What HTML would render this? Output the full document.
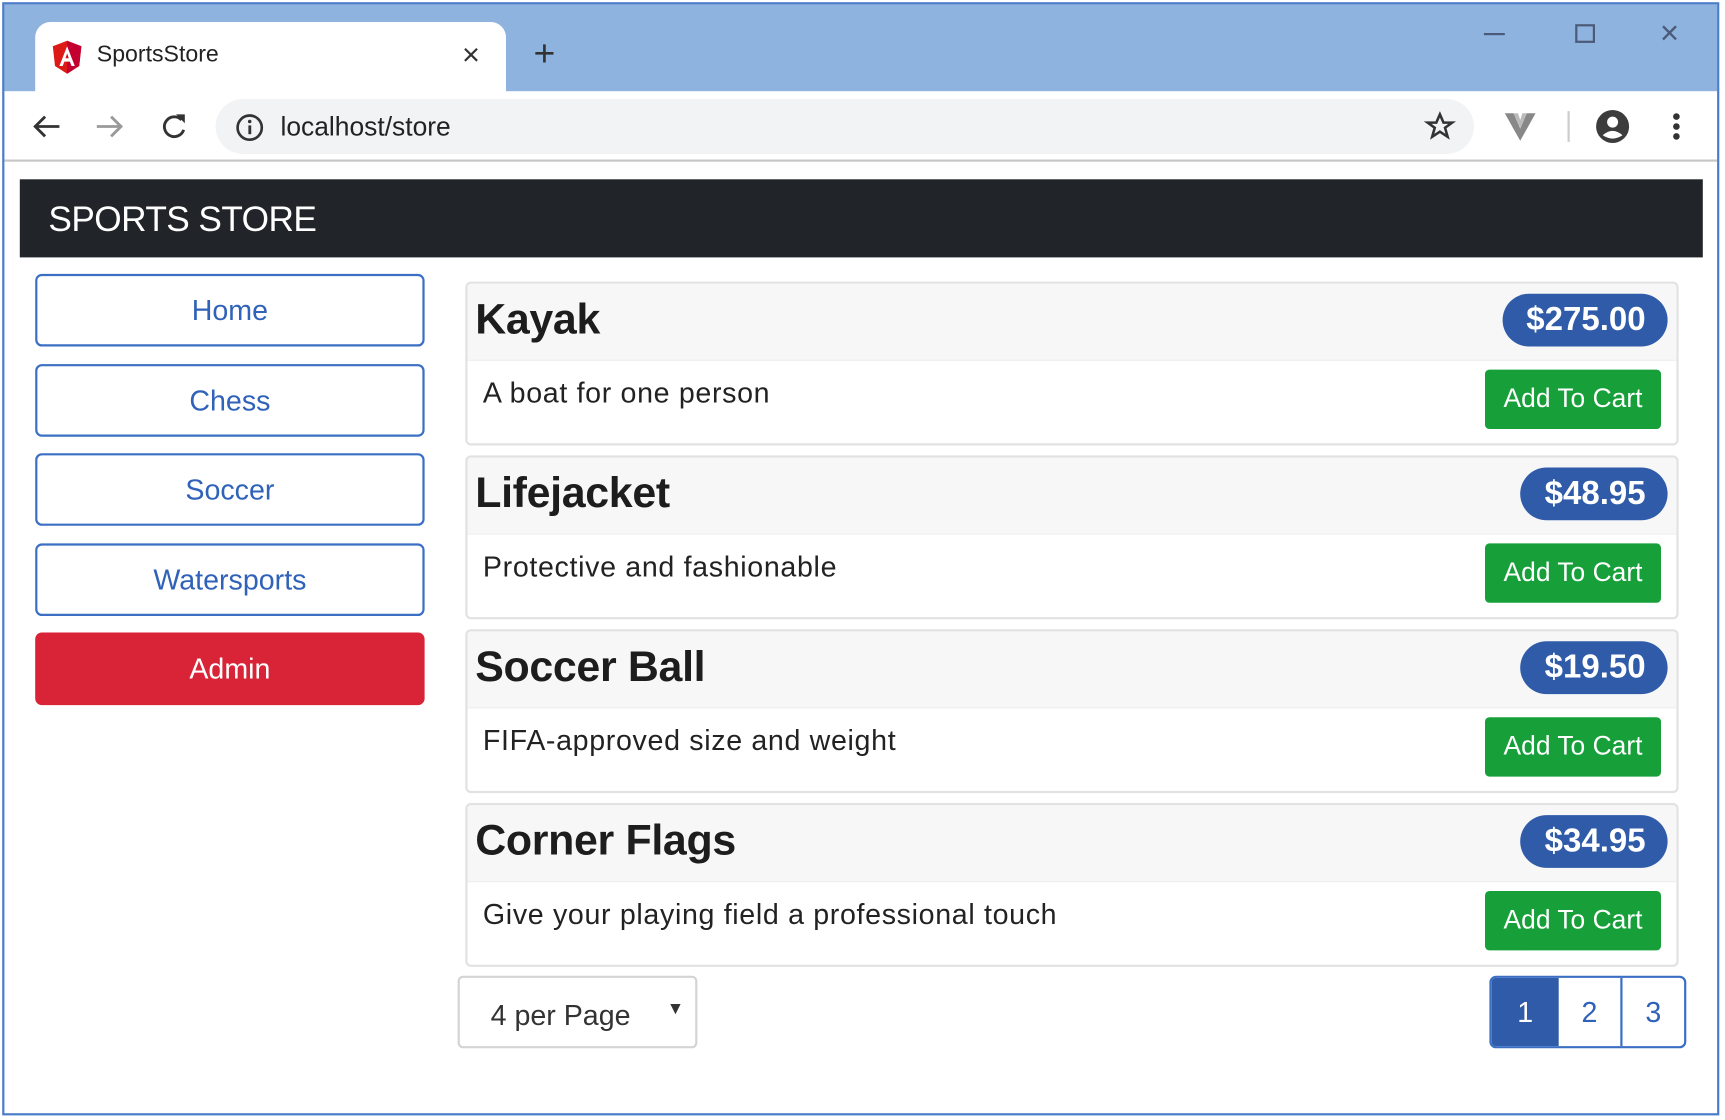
<!DOCTYPE html>
<html><head><meta charset="utf-8"><style>
*{box-sizing:border-box;margin:0;padding:0}
html,body{width:1725px;height:1120px;overflow:hidden;background:#fff;font-family:"Liberation Sans",sans-serif}
#w{position:absolute;left:0;top:0;width:1568px;height:1018px;transform:scale(1.1);transform-origin:0 0}
.a{position:absolute}
.frame{left:2px;top:2px;width:1561px;height:1012px;border:2px solid #4a7cc9}
.tabbar{left:4px;top:4px;width:1557px;height:79px;background:#8fb3df}
.tab{left:32px;top:20px;width:428px;height:64px;background:#fff;border-radius:14px 14px 0 0}
.tb{left:4px;top:83px;width:1557px;height:64px;background:#fff;border-bottom:2px solid #c8c8c8}
.addr{left:196px;top:90px;width:1144px;height:50px;background:#f1f3f4;border-radius:25px}
.hdr{left:18px;top:163px;width:1530px;height:71px;background:#212529;color:#fff;font-size:32px;padding:18px 0 0 26px;letter-spacing:-0.5px}
.nb{left:32px;width:354px;height:66px;border:2px solid #3a6fc4;border-radius:6px;color:#2f62b8;font-size:26px;text-align:center;line-height:62px}
.card{left:423px;width:1103px;height:149px;border:2px solid #e2e2e2;border-radius:5px;overflow:hidden}
.ch{position:absolute;left:0;top:0;width:100%;height:70px;background:#f7f7f7;border-bottom:1px solid #eee}
.ct{position:absolute;left:7px;top:11px;font-size:39px;font-weight:bold;color:#1d1d1d;letter-spacing:-0.3px}
.bd{position:absolute;right:8px;top:9px;height:48px;border-radius:24px;background:#2f5ba8;color:#fff;font-weight:bold;font-size:30px;line-height:48px;padding:0 20px 0 22px}
.ds{position:absolute;left:14px;top:84px;font-size:26px;color:#222;letter-spacing:0.6px}
.bt{position:absolute;right:14px;top:78px;width:160px;height:54px;background:#17a03a;border-radius:4px;color:#fff;font-size:24px;text-align:center;line-height:54px}
</style></head><body><div id="w">
<div class="a tabbar"></div>
<div class="a tab"></div>
<svg class="a" style="left:46px;top:36px" width="30" height="32" viewBox="0 0 30 32"><path d="M15 1 L28 6 L26 24 L15 31 L4 24 L2 6Z" fill="#dd1b16"/><path d="M15 1 L28 6 L26 24 L15 31Z" fill="#c3002f"/><path d="M15 6 L8 24 H11 L12.5 20 H17.5 L19 24 H22Z M13.5 17 L15 12.5 L16.5 17Z" fill="#fff"/></svg>
<div class="a" style="left:88px;top:38px;font-size:21px;color:#222">SportsStore</div>
<div class="a" style="left:420px;top:34px;font-size:28px;color:#333">×</div>
<div class="a" style="left:485px;top:30px;font-size:34px;color:#333">+</div>
<div class="a" style="left:1349px;top:30px;width:19px;height:2px;background:#4a5a78"></div>
<div class="a" style="left:1432px;top:22px;width:18px;height:17px;border:2px solid #4a5a78"></div>
<div class="a" style="left:1509px;top:14px;font-size:30px;color:#4a5a78">×</div>
<div class="a tb"></div>
<svg class="a" style="left:28px;top:101px" width="200" height="30" viewBox="0 0 200 30"><path d="M26 14H4M13 5L4 14L13 23" stroke="#333" stroke-width="2.6" fill="none"/><path d="M60 14H82M73 5L82 14L73 23" stroke="#999" stroke-width="2.6" fill="none"/><path d="M137 8A9 9 0 1 0 139 17" stroke="#333" stroke-width="2.6" fill="none"/><path d="M132 3L140 3L140 11Z" fill="#333"/></svg>
<div class="a addr"></div>
<svg class="a" style="left:214px;top:103px" width="26" height="26"><circle cx="13" cy="13" r="11" stroke="#333" stroke-width="2.4" fill="none"/><rect x="11.8" y="11" width="2.6" height="8" fill="#333"/><circle cx="13" cy="7.5" r="1.6" fill="#333"/></svg>
<div class="a" style="left:255px;top:102px;font-size:24px;color:#222">localhost/store</div>
<svg class="a" style="left:1294px;top:101px" width="30" height="28" viewBox="0 0 24 24"><path d="M12 2.5L14.8 9H21.5L16 13L18 20L12 16L6 20L8 13L2.5 9H9.2Z" stroke="#333" stroke-width="2" fill="none"/></svg>
<svg class="a" style="left:1366px;top:101px" width="32" height="28"><path d="M2 2H10L16 16L22 2H30L16 27Z" fill="#888"/><path d="M10 2L16 16L22 2H18L16 8L14 2Z" fill="#bbb"/></svg>
<div class="a" style="left:1425px;top:101px;width:2px;height:28px;background:#ccc"></div>
<svg class="a" style="left:1450px;top:99px" width="32" height="32"><circle cx="16" cy="16" r="15" fill="#3c3c3c"/><circle cx="16" cy="12" r="5" fill="#fff"/><path d="M7 24Q16 16 25 24Q16 30 7 24Z" fill="#fff"/></svg>
<div class="a" style="left:1521px;top:103px;width:6px;height:6px;border-radius:3px;background:#333;box-shadow:0 9px 0 #333,0 18px 0 #333"></div>
<div class="a frame"></div>
<div class="a hdr">SPORTS STORE</div>
<div class="a nb" style="top:249px">Home</div>
<div class="a nb" style="top:331px">Chess</div>
<div class="a nb" style="top:412px">Soccer</div>
<div class="a nb" style="top:494px">Watersports</div>
<div class="a nb" style="top:575px;background:#d92336;border-color:#d92336;color:#fff">Admin</div>
<div class="a card" style="top:256px"><div class="ch"></div><div class="ct">Kayak</div><div class="bd">$275.00</div><div class="ds">A boat for one person</div><div class="bt">Add To Cart</div></div>
<div class="a card" style="top:414px"><div class="ch"></div><div class="ct">Lifejacket</div><div class="bd">$48.95</div><div class="ds">Protective and fashionable</div><div class="bt">Add To Cart</div></div>
<div class="a card" style="top:572px"><div class="ch"></div><div class="ct">Soccer Ball</div><div class="bd">$19.50</div><div class="ds">FIFA-approved size and weight</div><div class="bt">Add To Cart</div></div>
<div class="a card" style="top:730px"><div class="ch"></div><div class="ct">Corner Flags</div><div class="bd">$34.95</div><div class="ds">Give your playing field a professional touch</div><div class="bt">Add To Cart</div></div>
<div class="a" style="left:416px;top:887px;width:218px;height:66px;border:2px solid #d4d4d4;border-radius:5px;font-size:26px;color:#333;padding:19px 0 0 28px">4 per Page<span style="position:absolute;right:10px;top:20px;font-size:16px">▼</span></div>
<div class="a" style="left:1354px;top:887px;width:179px;height:66px;border:2px solid #3a6fc4;border-radius:6px;overflow:hidden;display:flex;font-size:26px;color:#2f62b8">
<div style="width:61px;background:#2f5ba8;color:#fff;text-align:center;line-height:62px">1</div>
<div style="width:58px;border-right:2px solid #3a6fc4;text-align:center;line-height:62px">2</div>
<div style="flex:1;text-align:center;line-height:62px">3</div></div>
</div></body></html>
